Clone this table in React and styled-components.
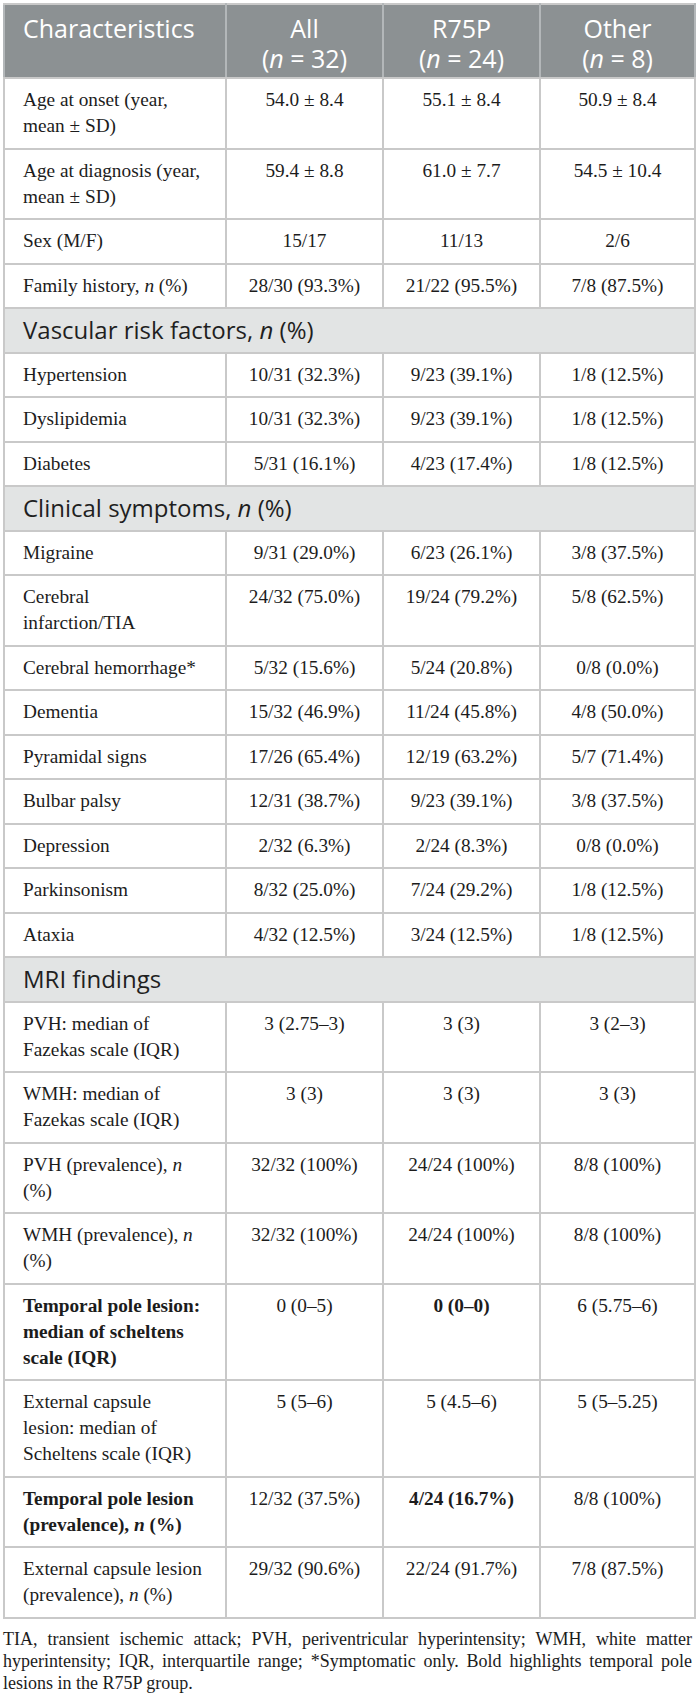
import React from "react";
import styled, { createGlobalStyle } from "styled-components";

const GlobalStyle = createGlobalStyle`
  html, body { margin: 0; padding: 0; background: #ffffff; }
  body { font-family: "Liberation Serif", "Times New Roman", serif; color: #1c1c1c; }
`;

const Page = styled.div`
  width: 697px;
  box-sizing: border-box;
  padding: 3px 3px 8px 3px;
`;

const Table = styled.table`
  width: 691px;
  border-collapse: collapse;
  table-layout: fixed;
  border: 2px solid #c9c9c9;
`;

const HeadCell = styled.th`
  background: #8c9193;
  color: #ffffff;
  font-family: "Open Sans", "Noto Sans", sans-serif;
  font-weight: 400;
  font-size: 25px;
  line-height: 30px;
  padding: 8px ${(p) => (p.$first ? "10px" : "6px")} 4px ${(p) => (p.$first ? "18px" : "6px")};
  text-align: ${(p) => (p.$first ? "left" : "center")};
  vertical-align: top;
  border: 2px solid #c9c9c9;
  border-left-color: #b3b7b9;
  border-right-color: #b3b7b9;
`;

const Row = styled.tr``;

const Cell = styled.td`
  font-family: "Liberation Serif", "Times New Roman", serif;
  font-size: 19.3px;
  line-height: 26px;
  font-weight: ${(p) => (p.$bold ? 700 : 400)};
  padding: 8.25px ${(p) => (p.$first ? "21px" : "6px")} 8.25px ${(p) => (p.$first ? "18px" : "6px")};
  text-align: ${(p) => (p.$first ? "left" : "center")};
  vertical-align: top;
  border: 2px solid #c9c9c9;
  color: #1c1c1c;
`;

const SectionCell = styled.td`
  background: #e2e4e4;
  font-family: "Open Sans", "Noto Sans", sans-serif;
  font-size: 24px;
  line-height: 26px;
  color: #1f1f1f;
  padding: 8.25px 18px 8.25px 18px;
  text-align: left;
  border: 2px solid #c9c9c9;
`;

const N = styled.i`
  font-style: italic;
`;

const Footnote = styled.p`
  margin: 9px 0 0 0;
  padding: 0 2px 0 0;
  font-family: "Liberation Serif", "Times New Roman", serif;
  font-size: 18px;
  line-height: 22px;
  text-align: justify;
  color: #1c1c1c;
`;

const n = <N>n</N>;

const rows = [
  { label: <>Age at onset (year, mean ± SD)</>, v: ["54.0 ± 8.4", "55.1 ± 8.4", "50.9 ± 8.4"] },
  { label: <>Age at diagnosis (year, mean ± SD)</>, v: ["59.4 ± 8.8", "61.0 ± 7.7", "54.5 ± 10.4"] },
  { label: <>Sex (M/F)</>, v: ["15/17", "11/13", "2/6"] },
  { label: <>Family history, {n} (%)</>, v: ["28/30 (93.3%)", "21/22 (95.5%)", "7/8 (87.5%)"] },
  { section: <>Vascular risk factors, {n} (%)</> },
  { label: <>Hypertension</>, v: ["10/31 (32.3%)", "9/23 (39.1%)", "1/8 (12.5%)"] },
  { label: <>Dyslipidemia</>, v: ["10/31 (32.3%)", "9/23 (39.1%)", "1/8 (12.5%)"] },
  { label: <>Diabetes</>, v: ["5/31 (16.1%)", "4/23 (17.4%)", "1/8 (12.5%)"] },
  { section: <>Clinical symptoms, {n} (%)</> },
  { label: <>Migraine</>, v: ["9/31 (29.0%)", "6/23 (26.1%)", "3/8 (37.5%)"] },
  { label: <>Cerebral infarction/TIA</>, v: ["24/32 (75.0%)", "19/24 (79.2%)", "5/8 (62.5%)"] },
  { label: <>Cerebral hemorrhage*</>, v: ["5/32 (15.6%)", "5/24 (20.8%)", "0/8 (0.0%)"] },
  { label: <>Dementia</>, v: ["15/32 (46.9%)", "11/24 (45.8%)", "4/8 (50.0%)"] },
  { label: <>Pyramidal signs</>, v: ["17/26 (65.4%)", "12/19 (63.2%)", "5/7 (71.4%)"] },
  { label: <>Bulbar palsy</>, v: ["12/31 (38.7%)", "9/23 (39.1%)", "3/8 (37.5%)"] },
  { label: <>Depression</>, v: ["2/32 (6.3%)", "2/24 (8.3%)", "0/8 (0.0%)"] },
  { label: <>Parkinsonism</>, v: ["8/32 (25.0%)", "7/24 (29.2%)", "1/8 (12.5%)"] },
  { label: <>Ataxia</>, v: ["4/32 (12.5%)", "3/24 (12.5%)", "1/8 (12.5%)"] },
  { section: <>MRI findings</> },
  { label: <>PVH: median of Fazekas scale (IQR)</>, v: ["3 (2.75–3)", "3 (3)", "3 (2–3)"] },
  { label: <>WMH: median of Fazekas scale (IQR)</>, v: ["3 (3)", "3 (3)", "3 (3)"] },
  { label: <>PVH (prevalence), {n} (%)</>, v: ["32/32 (100%)", "24/24 (100%)", "8/8 (100%)"] },
  { label: <>WMH (prevalence), {n} (%)</>, v: ["32/32 (100%)", "24/24 (100%)", "8/8 (100%)"] },
  { label: <>Temporal pole lesion: median of scheltens scale (IQR)</>, bold: true, v: ["0 (0–5)", "0 (0–0)", "6 (5.75–6)"], boldCol: 1 },
  { label: <>External capsule lesion: median of Scheltens scale (IQR)</>, v: ["5 (5–6)", "5 (4.5–6)", "5 (5–5.25)"] },
  { label: <>Temporal pole lesion (prevalence), {n} (%)</>, bold: true, v: ["12/32 (37.5%)", "4/24 (16.7%)", "8/8 (100%)"], boldCol: 1 },
  { label: <>External capsule lesion (prevalence), {n} (%)</>, v: ["29/32 (90.6%)", "22/24 (91.7%)", "7/8 (87.5%)"] },
];

export default function App() {
  return (
    <>
      <GlobalStyle />
      <Page>
        <Table>
          <colgroup>
            <col style={{ width: "222px" }} />
            <col style={{ width: "157px" }} />
            <col style={{ width: "157px" }} />
            <col style={{ width: "155px" }} />
          </colgroup>
          <thead>
            <tr>
              <HeadCell $first>Characteristics</HeadCell>
              <HeadCell>All<br />(<N>n</N> = 32)</HeadCell>
              <HeadCell>R75P<br />(<N>n</N> = 24)</HeadCell>
              <HeadCell>Other<br />(<N>n</N> = 8)</HeadCell>
            </tr>
          </thead>
          <tbody>
            {rows.map((r, i) =>
              r.section ? (
                <Row key={i}>
                  <SectionCell colSpan={4}>{r.section}</SectionCell>
                </Row>
              ) : (
                <Row key={i}>
                  <Cell $first $bold={r.bold}>{r.label}</Cell>
                  {r.v.map((val, j) => (
                    <Cell key={j} $bold={r.boldCol === j}>{val}</Cell>
                  ))}
                </Row>
              )
            )}
          </tbody>
        </Table>
        <Footnote>
          TIA, transient ischemic attack; PVH, periventricular hyperintensity; WMH, white matter
          hyperintensity; IQR, interquartile range; *Symptomatic only. Bold highlights temporal pole
          lesions in the R75P group.
        </Footnote>
      </Page>
    </>
  );
}
